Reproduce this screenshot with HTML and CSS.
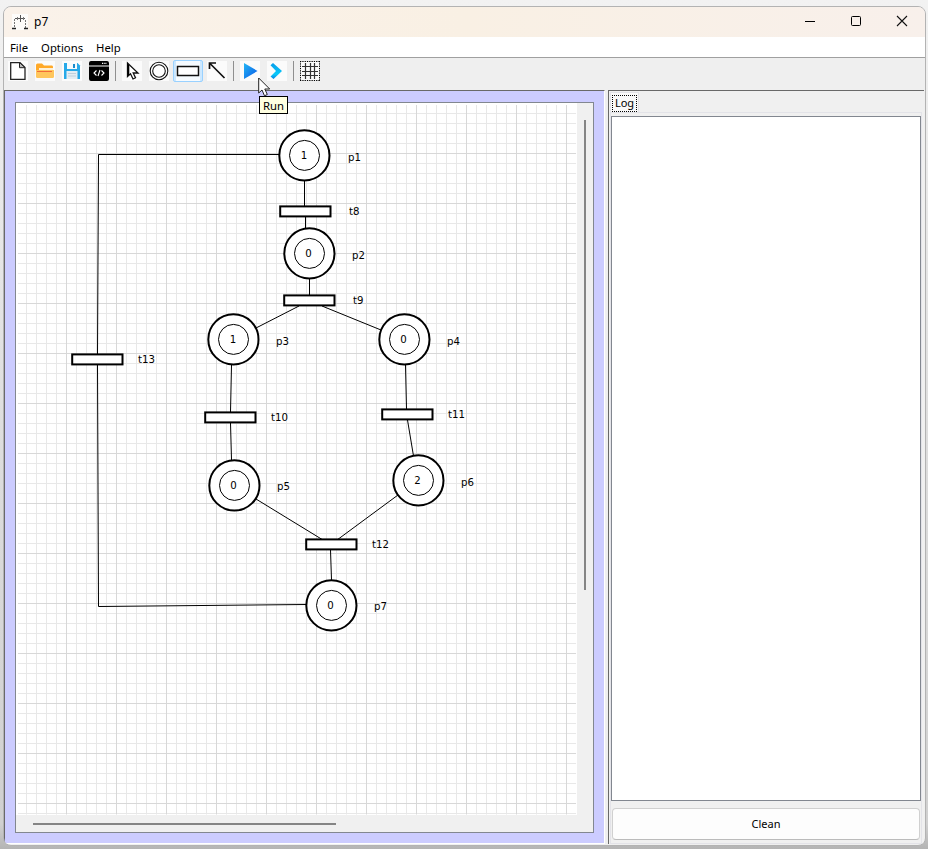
FILE: index.html
```html
<!DOCTYPE html>
<html lang="en">
<head>
<meta charset="utf-8">
<title>p7</title>
<link rel="stylesheet" href="styles.css">
</head>
<body>
<div class="window">
  <header class="titlebar">
    <svg class="app-icon" width="16" height="16" viewBox="0 0 16 16"><rect width="16" height="16" fill="#fdfcfa"/><path d="M3 4.500H13M8.500 1V8" stroke="#555" fill="none"/><path d="M5.500 3V6M11.500 3V6" stroke="#777"/><path d="M2.500 5V14M13.500 6V14" stroke="#777" stroke-dasharray="2 1" fill="none"/><path d="M0 14.500H4M12 14.500H16" stroke="#222" stroke-width="1.500"/></svg>
    <span class="title">p7</span>
    <div class="controls">
      <svg width="12" height="12"><path d="M1 6.500H11" stroke="#000"/></svg>
      <svg width="12" height="12"><rect x="1.500" y="1.500" width="9" height="9" rx="1" fill="none" stroke="#000"/></svg>
      <svg width="12" height="12"><path d="M1 1L11 11M11 1L1 11" stroke="#111" stroke-width="1.100"/></svg>
    </div>
  </header>
  <nav class="menu"><span class="m-file">File</span><span class="m-options">Options</span><span class="m-help">Help</span></nav>
  <div class="toolbar">
    <svg class="tool" viewBox="0 0 20 20"><path d="M2.700 1.600H12L17 6.500V18.300H2.700Z" fill="#fff" stroke="#222" stroke-width="1.300"/><path d="M11.500 1.600V6.700H17Z" fill="#bbb" stroke="#222"/></svg>
    <svg class="tool" viewBox="0 0 20 20"><path d="M1 4Q1 2.500 2.500 2.500H7L9 4.500H17Q18 4.500 18 6V15H1Z" fill="#ffa928"/><path d="M4 7H18V10H4Z" fill="#fff0d5"/><path d="M1 9H19V15.500Q19 17 17.500 17H2.500Q1 17 1 15.500Z" fill="#ffc65c"/><path d="M2 10.500H17" stroke="#f26b38"/></svg>
    <svg class="tool" viewBox="0 0 20 20"><path d="M2 2H15.500L18 4.500V18H2Z" fill="#27a9e8"/><rect x="5" y="2" width="10" height="6" fill="#f7fafc"/><rect x="11" y="3" width="2" height="4" fill="#178bcc"/><rect x="4.500" y="10" width="11" height="8" fill="#e4edf3"/><path d="M6 12.500H14M6 15H14" stroke="#c1d0dc"/></svg>
    <svg class="tool" viewBox="0 0 20 20"><path d="M0 2Q0 0 2 0H18Q20 0 20 2V4.500H0ZM0 5.500H20V18Q20 20 18 20H2Q0 20 0 18Z"/><path d="M13 2.400H18" stroke="#fff" stroke-width="1.300" stroke-dasharray="1 .7"/><path d="M7.500 9.500L5 12L7.500 14.500M12.500 9.500L15 12L12.500 14.500M11 9L9 15" fill="none" stroke="#fff" stroke-width="1.100"/></svg>
    <i class="sep"></i>
    <svg class="tool" viewBox="0 0 20 20"><path d="M5.500 2L5.500 15.500L8.500 12.800L11 18L13.500 16.800L11.200 12H16Z" fill="#fff" stroke="#111" stroke-width="1.300"/><path d="M5.500 2V15.500L7.300 13.500V4.500Z"/></svg>
    <svg class="tool" viewBox="0 0 20 20"><circle cx="10" cy="10" r="8.800" fill="#fff" stroke="#111" stroke-width="1.100"/><circle cx="10" cy="10" r="6.300" fill="#fff" stroke="#111" stroke-width="1.100"/></svg>
    <span class="selected"><svg width="24" height="20"><rect x="1.500" y="5.500" width="21" height="9" fill="#fff" stroke="#111" stroke-width="1.500"/></svg></span>
    <svg class="tool" viewBox="0 0 20 20"><path d="M3 2.500L17.500 17M2.500 8V2H9" fill="none" stroke="#111" stroke-width="1.700"/></svg>
    <i class="sep"></i>
    <svg class="tool" viewBox="0 0 20 20"><defs><linearGradient id="run" x2="1" y2="1"><stop stop-color="#25b7f5"/><stop offset="1" stop-color="#0757e7"/></linearGradient></defs><path d="M4 2V18L17.500 10Z" fill="url(#run)"/></svg>
    <svg class="tool" viewBox="0 0 20 20"><defs><linearGradient id="step" x2="0" y2="1"><stop stop-color="#079bea"/><stop offset=".7" stop-color="#08cafa"/><stop offset="1" stop-color="#087ee2"/></linearGradient></defs><path d="M3.500 4.200L6 2L15 10L6.500 18L3.500 15.500L9 10Z" fill="url(#step)"/></svg>
    <i class="sep"></i>
    <svg class="tool" viewBox="0 0 20 20"><path d="M0 .5H20M0 19.500H20M.5 0V20M19.500 0V20" stroke="#000" stroke-dasharray="1.300 1"/><path d="M5.500 2V18M10.500 2V18M14.500 2V18M2 5.500H18M2 10.500H18M2 14.500H18" stroke="#333" stroke-width="1.200"/></svg>
  </div>
  <main class="workspace">
    <section class="editor">
      <div class="scrollpane">
        <svg class="net" width="561" height="712" viewBox="16 103 561 712">
          <defs>
            <pattern id="grid" x="16" y="103" width="50" height="50" patternUnits="userSpaceOnUse">
              <path d="M10.500 0V50M20.500 0V50M30.500 0V50M40.500 0V50M0 10.500H50M0 20.500H50M0 30.500H50M0 40.500H50" stroke="#e8e8e8"/>
              <path d="M.5 0V50M0 .5H50" stroke="#d8d8d8"/>
            </pattern>
          </defs>
          <rect x="18" y="105" width="558" height="709.500" fill="url(#grid)"/>
          <g class="arcs">
            <path d="M280 154.500H98.500L97.500 354M97.500 365L98.500 606.500L306 604.500"/>
            <path d="M304.500 181V206M305.500 217V229M309.500 279V295M299 306L256 328M322 306L381 330"/>
            <path d="M231.500 365L230.500 412M230.500 423L231.500 460M405.500 365L406.500 409M407.500 420L413.500 456"/>
            <path d="M256 499L323 540M398 495L337 540M330.500 550L331.500 580"/>
          </g>
          <g class="places">
            <circle cx="304.400" cy="155.400" r="25.100"/><circle cx="309.400" cy="253.400" r="25.100"/><circle cx="233.400" cy="339.400" r="25.100"/><circle cx="404.400" cy="339.400" r="25.100"/><circle cx="234.400" cy="485.400" r="25.100"/><circle cx="418.400" cy="480.400" r="25.100"/><circle cx="331.400" cy="605.400" r="25.100"/>
          </g>
          <g class="inner">
            <circle cx="304.500" cy="155.400" r="15"/><circle cx="309.500" cy="253.400" r="15"/><circle cx="233.500" cy="339.400" r="15"/><circle cx="404.500" cy="339.400" r="15"/><circle cx="234.500" cy="485.400" r="15"/><circle cx="418.500" cy="480.400" r="15"/><circle cx="331.500" cy="605.400" r="15"/>
          </g>
          <g class="transitions">
            <rect x="280.200" y="206.400" width="50.300" height="10"/><rect x="284.200" y="295.400" width="50.300" height="10"/><rect x="72.200" y="354.400" width="50.300" height="10"/><rect x="205.200" y="412.400" width="50.300" height="10"/><rect x="382.200" y="409.400" width="50.300" height="10"/><rect x="306.200" y="539.400" width="50.300" height="10"/>
          </g>
          <g class="tokens">
            <text x="304" y="159">1</text><text x="308.500" y="257">0</text><text x="233" y="343">1</text><text x="403.500" y="343">0</text><text x="233.500" y="489">0</text><text x="417.500" y="484">2</text><text x="330.500" y="609">0</text>
          </g>
          <g class="labels">
            <text x="348" y="161">p1</text><text x="349" y="215">t8</text><text x="352" y="259">p2</text><text x="353" y="304">t9</text><text x="276" y="345">p3</text><text x="447" y="345">p4</text><text x="138" y="363">t13</text><text x="271" y="421">t10</text><text x="448" y="418">t11</text><text x="277" y="490">p5</text><text x="461" y="486">p6</text><text x="372" y="548">t12</text><text x="374" y="610">p7</text>
          </g>
        </svg>
        <div class="vscroll"><i></i></div>
        <div class="hscroll"><i></i></div>
      </div>
    </section>
    <aside class="log">
      <div class="tabs"><span class="tab"><span class="tab-label">Log</span></span></div>
      <div class="pane">
        <div class="output"></div>
        <button class="clean">Clean</button>
      </div>
    </aside>
  </main>
</div>
<div class="tooltip">Run</div>
<svg class="cursor" width="13" height="20" viewBox="0 0 13 20"><path d="M.7 1V16L4 13L6.500 18.800L9.300 17.500L6.800 12H11.700Z" fill="#fff" stroke="#222"/></svg>
</body>
</html>
```
FILE: styles.css
```css
* { box-sizing: border-box; }
body { margin: 0; width: 928px; height: 849px; padding: 6px 2px 3px 3px; overflow: hidden; background: linear-gradient(#f2f2f2, #dedede 50%, #d0d0d0 97%, #b4b4b4); font: 11.300px "Noto Sans", "Open Sans", sans-serif; color: #000; }
.window { width: 923px; height: 840px; border: 1px solid #b3b3b3; border-radius: 8px; overflow: hidden; background: #efefef; display: flex; flex-direction: column; }
.titlebar { height: 30px; flex: none; display: flex; align-items: center; padding: 0 17px 0 8px; background: linear-gradient(90deg, #faf2ea, #f9f0e4 50%, #f8f0eb); }
.title { margin: -1px 0 0 6px; font-size: 12px; }
.controls { margin-left: auto; display: flex; gap: 34px; position: relative; top: -1px; }
.menu { height: 21px; flex: none; display: flex; gap: 13px; padding: 0 6px; line-height: 21px; background: #fff; border-bottom: 1px solid #a0a0a0; }
.toolbar { height: 32px; flex: none; display: flex; padding: 3px 0 0 4px; background: #efefef; }
.tool { width: 20px; height: 20px; margin-right: 7px; flex: none; background: #fbfbfb; }
.sep { width: 1px; height: 20px; margin: 0 6px 0 -1px; background: #8f8f8f; }
.selected { width: 30px; height: 22px; margin: -1px 4px 0 -3px; padding: 0 2px; border: 1px solid #99d1ff; border-radius: 2px; background: #cce8ff; }
.selected svg { display: block; background: #f6fbff; }
.workspace { flex: 1; min-height: 0; display: flex; }
.editor { width: 601px; height: 754px; padding: 11px 11px 11px 10px; background: #ccccff; border-top: 1px solid #696969; border-left: 1px solid #696969; border-right: 1px solid #fff; border-bottom: 1px solid #fff; }
.scrollpane { width: 579px; height: 731px; display: grid; grid-template: 712px 17px / 561px 16px; background: #f0f0f0; border: 1px solid #828790; }
.net { display: block; background: #fff; font: 10.200px "DejaVu Sans", sans-serif; }
.arcs { fill: none; stroke: #000; stroke-width: 1; }
.places { fill: #fff; stroke: #000; stroke-width: 2; }
.inner { fill: #fff; stroke: #000; stroke-width: 1; }
.transitions { fill: #fff; stroke: #000; stroke-width: 2; }
.tokens { text-anchor: middle; }
.vscroll { padding: 17px 0 0 7px; }
.vscroll i { display: block; width: 2px; height: 470px; background: #858585; }
.hscroll { padding: 8px 0 0 17px; }
.hscroll i { display: block; width: 303px; height: 2px; background: #858585; }
.log { width: 316px; height: 754px; margin-left: 3px; padding: 1px 2px 0 1px; border-top: 1px solid #696969; border-left: 1px solid #696969; background: #f0f0f0; }
.tabs { height: 20px; }
.tab { display: block; width: 29px; height: 21px; padding: 2px 2px 0 1px; background: #f9f9f9; border: 1px solid #e3e3e8; border-bottom: 0; }
.tab-label { display: block; width: 25px; height: 17px; border: 1px dotted #000; line-height: 13px; text-align: center; font-size: 11px; }
.pane { height: 732px; padding: 3px 0 0; border: 1px solid #e3e3e8; }
.output { width: 310px; height: 685px; background: #fff; border: 1px solid #828790; }
.clean { display: block; width: 308px; height: 32px; margin: 7px 0 0 1px; padding: 0 0 2px; border: 1px solid #d0d0d0; border-bottom-color: #bbb; border-radius: 4px; background: #fdfdfd; color: #000; font: 11px "Noto Sans", sans-serif; }
.tooltip { position: absolute; left: 259px; top: 96px; width: 29px; height: 18px; border: 1px solid #000; background: #ffffe1; text-align: center; line-height: 17px; }
.cursor { position: absolute; left: 258px; top: 77px; }
```
